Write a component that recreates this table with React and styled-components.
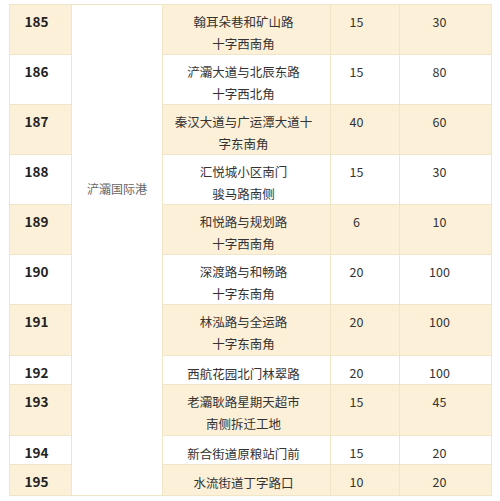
import React from 'react';
import styled, { createGlobalStyle } from 'styled-components';

const columns = [62, 91, 168, 69, 92];

const rows = [
  { no: 185, lines: ['翰耳朵巷和矿山路', '十字西南角'], a: '15', b: '30', h: 49 },
  { no: 186, lines: ['浐灞大道与北辰东路', '十字西北角'], a: '15', b: '80', h: 50 },
  { no: 187, lines: ['秦汉大道与广运潭大道十', '字东南角'], a: '40', b: '60', h: 50 },
  { no: 188, lines: ['汇悦城小区南门', '骏马路南侧'], a: '15', b: '30', h: 49 },
  { no: 189, lines: ['和悦路与规划路', '十字西南角'], a: '6', b: '10', h: 50 },
  { no: 190, lines: ['深渡路与和畅路', '十字东南角'], a: '20', b: '100', h: 49 },
  { no: 191, lines: ['林泓路与全运路', '十字东南角'], a: '20', b: '100', h: 51 },
  { no: 192, lines: ['西航花园北门林翠路'], a: '20', b: '100', h: 29 },
  { no: 193, lines: ['老灞耿路星期天超市', '南侧拆迁工地'], a: '15', b: '45', h: 51 },
  { no: 194, lines: ['新合街道原粮站门前'], a: '15', b: '20', h: 29 },
  { no: 195, lines: ['水流街道丁字路口'], a: '10', b: '20', h: 31 },
];

const App = () => (
  <Page>
    <GlobalStyle />
    <Table>
      <colgroup>
        {columns.map((w, i) => (
          <Col key={i} $w={w} />
        ))}
      </colgroup>
      <tbody>
        {rows.map((r, i) => (
          <Row key={r.no} $shade={i % 2 === 0} $h={r.h}>
            <NoCell>{r.no}</NoCell>
            {i === 0 && (
              <AreaCell rowSpan={rows.length}>浐灞国际港</AreaCell>
            )}
            <PlaceCell $single={r.lines.length === 1}>
              {r.lines.map((l, k) => (
                <Line key={k}>{l}</Line>
              ))}
            </PlaceCell>
            <NumCell $pr={17}>{r.a}</NumCell>
            <NumCell $pr={12}>{r.b}</NumCell>
          </Row>
        ))}
      </tbody>
    </Table>
  </Page>
);

export default App;

const GlobalStyle = createGlobalStyle`
  html, body {
    margin: 0;
    padding: 0;
    background: #ffffff;
  }
  body {
    font-family: "Noto Sans CJK SC", "Noto Sans", sans-serif;
  }
`;

const Page = styled.div`
  width: 500px;
  height: 501px;
  padding: 4px 0 0 9px;
  box-sizing: border-box;
  background: #ffffff;
`;

const Table = styled.table`
  width: 482px;
  table-layout: fixed;
  border-collapse: collapse;
  border: 1px solid #f6ecd6;
`;

const Col = styled.col`
  width: ${({ $w }) => $w}px;
`;

const Row = styled.tr`
  height: ${({ $h }) => $h}px;
  background: ${({ $shade }) => ($shade ? '#fcf0d8' : '#ffffff')};
`;

const Cell = styled.td`
  border: 1px solid #f1e5c8;
  vertical-align: top;
  text-align: center;
  padding: 6px 0 0 0;
  line-height: 21px;
  box-sizing: border-box;
`;

const NoCell = styled(Cell)`
  padding-right: 8px;
  font-size: 13.5px;
  font-weight: 700;
  color: #222222;
`;

const AreaCell = styled(Cell)`
  background: #ffffff;
  padding-top: 173px;
  font-size: 12px;
  color: #666666;
`;

const PlaceCell = styled(Cell)`
  padding-right: 6px;
  padding-top: ${({ $single }) => ($single ? '7px' : '6px')};
  font-size: 12.5px;
  color: #333333;
`;

const Line = styled.div`
  white-space: nowrap;
  & + & {
    margin-top: 1px;
  }
`;

const NumCell = styled(Cell)`
  padding-right: ${({ $pr }) => $pr}px;
  font-size: 12.5px;
  color: #333333;
`;
